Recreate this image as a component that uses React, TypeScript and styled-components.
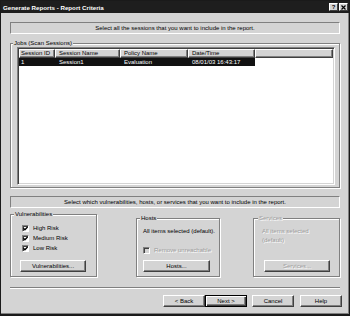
import React from "react";
import styled, { createGlobalStyle, css } from "styled-components";

const FACE = "#d4d4d4";
const SHADOW = "#808080";
const DARK = "#404040";

const GlobalStyle = createGlobalStyle`
  html, body { margin: 0; padding: 0; background: ${FACE}; }
  *, *::before, *::after { box-sizing: border-box; }
`;

const Dialog = styled.div`
  width: 350px;
  height: 316px;
  background: ${FACE};
  border: 1px solid #1a1a1a;
  border-bottom-width: 2px;
  box-shadow: inset -1px -1px 0 ${SHADOW};
  display: flex;
  flex-direction: column;
  font-family: "Liberation Sans", Arial, sans-serif;
  font-size: 6px;
  line-height: 7px;
  color: #000;
  overflow: hidden;
`;

const TitleBar = styled.div`
  height: 12px;
  flex: none;
  background: #1e1e1e;
  color: #fff;
  font-weight: bold;
  font-size: 6.2px;
  display: flex;
  align-items: center;
  justify-content: space-between;
  padding: 0 1px 0 2px;
`;

const TitleButtons = styled.div`
  display: flex;
  gap: 1px;
`;

const TitleButton = styled.div`
  width: 9px;
  height: 8px;
  background: ${FACE};
  border: 1px solid;
  border-color: #fff ${DARK} ${DARK} #fff;
  color: #000;
  font-size: 6px;
  font-weight: bold;
  line-height: 6px;
  display: flex;
  align-items: center;
  justify-content: center;
`;

const Body = styled.div`
  flex: 1;
  display: flex;
  flex-direction: column;
  padding: 0 9px;
`;

const Strip = styled.div<{ $top: number }>`
  margin-top: ${(p) => p.$top}px;
  height: 12px;
  flex: none;
  border: 1px solid;
  border-color: ${SHADOW} #fff #fff ${SHADOW};
  display: flex;
  align-items: center;
  justify-content: center;
  white-space: nowrap;
`;

const Group = styled.fieldset<{ $width?: number; $left?: number; $top?: number }>`
  margin: ${(p) => p.$top ?? 0}px 0 0 ${(p) => p.$left ?? 0}px;
  padding: 0;
  min-width: 0;
  ${(p) => (p.$width ? `width: ${p.$width}px;` : "")}
  flex: none;
  border: 1px solid ${SHADOW};
  box-shadow: inset 1px 1px 0 #fff, 1px 1px 0 #fff;
`;

const Legend = styled.legend<{ $indent: number; $disabled?: boolean }>`
  margin-left: ${(p) => p.$indent}px;
  padding: 0 1px;
  font-size: 6px;
  line-height: 7px;
  background: ${FACE};
  ${(p) =>
    p.$disabled &&
    css`
      color: #9c9c9c;
      text-shadow: 1px 1px 0 #fff;
    `}
`;

const GroupBody = styled.div<{ $height: number; $pad: string }>`
  height: ${(p) => p.$height}px;
  padding: ${(p) => p.$pad};
  display: flex;
  flex-direction: column;
`;

const ListView = styled.div`
  height: 138px;
  background: #fff;
  border: 1px solid;
  border-color: ${SHADOW} #fff #fff ${SHADOW};
  box-shadow: inset 1px 1px 0 ${DARK}, inset -1px -1px 0 ${FACE};
  padding: 1px;
  display: flex;
  flex-direction: column;
`;

const COLS = "36px 65px 68px 67px";

const HeaderRow = styled.div`
  display: grid;
  grid-template-columns: ${COLS} 1fr;
  height: 9px;
  flex: none;
`;

const HeaderCell = styled.div<{ $first?: boolean }>`
  background: ${FACE};
  border: 1px solid;
  border-color: #fff ${DARK} ${DARK} #fff;
  box-shadow: inset -1px -1px 0 ${SHADOW};
  padding-left: ${(p) => (p.$first ? 1 : 3)}px;
  line-height: 7px;
  white-space: nowrap;
  overflow: hidden;
`;

const DataRow = styled.div<{ $selected?: boolean }>`
  display: grid;
  grid-template-columns: ${COLS};
  width: 236px;
  height: 8px;
  line-height: 8px;
  ${(p) =>
    p.$selected &&
    css`
      background: #111;
      color: #fff;
    `}
`;

const DataCell = styled.div<{ $first?: boolean }>`
  padding-left: ${(p) => (p.$first ? 2 : 4)}px;
  white-space: nowrap;
  overflow: hidden;
`;

const GroupRow = styled.div`
  margin-top: 3px;
  display: flex;
  align-items: flex-end;
`;

const CheckList = styled.div`
  margin-left: 2px;
  display: flex;
  flex-direction: column;
`;

const CheckRow = styled.div<{ $disabled?: boolean; $top?: number }>`
  height: 10px;
  margin-top: ${(p) => p.$top ?? 0}px;
  display: flex;
  align-items: center;
  gap: 4px;
  white-space: nowrap;
  ${(p) =>
    p.$disabled &&
    css`
      color: #9c9c9c;
      text-shadow: 1px 1px 0 #fff;
    `}
`;

const Box = styled.span<{ $disabled?: boolean }>`
  width: 7px;
  height: 7px;
  flex: none;
  border: 1px solid;
  border-color: ${SHADOW} #fff #fff ${SHADOW};
  box-shadow: inset 1px 1px 0 ${DARK};
  background: ${(p) => (p.$disabled ? FACE : "#fff")};
  display: flex;
  align-items: center;
  justify-content: center;
`;

const Text = styled.div<{ $disabled?: boolean }>`
  line-height: 9px;
  white-space: nowrap;
  ${(p) =>
    p.$disabled &&
    css`
      color: #9c9c9c;
      text-shadow: 1px 1px 0 #fff;
    `}
`;

const Button = styled.button<{ $width: number; $default?: boolean; $disabled?: boolean; $left?: number }>`
  width: ${(p) => p.$width}px;
  height: 12px;
  flex: none;
  margin: 0 0 0 ${(p) => p.$left ?? 0}px;
  padding: 0;
  font: inherit;
  line-height: 8px;
  color: #000;
  background: ${FACE};
  border: 1px solid;
  border-color: #fff ${DARK} ${DARK} #fff;
  box-shadow: inset -1px -1px 0 ${SHADOW};
  ${(p) =>
    p.$default &&
    css`
      border-color: #000;
      box-shadow: inset 1px 1px 0 #fff, inset -1px -1px 0 ${DARK}, inset -2px -2px 0 ${SHADOW};
    `}
  ${(p) =>
    p.$disabled &&
    css`
      color: #9c9c9c;
      text-shadow: 1px 1px 0 #fff;
    `}
`;

const GroupButton = styled(Button)`
  margin-top: auto;
`;

const Separator = styled.div`
  margin-top: 10px;
  height: 2px;
  flex: none;
  border-top: 1px solid ${SHADOW};
  border-bottom: 1px solid #fff;
`;

const ButtonRow = styled.div`
  margin-top: 6px;
  margin-right: -2px;
  display: flex;
  justify-content: flex-end;
`;

const Check = () => (
  <svg width="5" height="5" viewBox="0 0 5 5">
    <path d="M0.4 2.3 L1.9 3.8 L4.6 0.9" fill="none" stroke="#000" strokeWidth="1.3" />
  </svg>
);

const CloseGlyph = () => (
  <svg width="5" height="5" viewBox="0 0 5 5">
    <path d="M0.5 0.5 L4.5 4.5 M4.5 0.5 L0.5 4.5" stroke="#000" strokeWidth="1.2" />
  </svg>
);

const sessions = [
  { id: "1", name: "Session1", policy: "Evaluation", date: "08/01/03  16:43:17" },
];

const risks = ["High Risk", "Medium Risk", "Low Risk"];

export default function App() {
  return (
    <>
      <GlobalStyle />
      <Dialog>
        <TitleBar>
          <span>Generate Reports - Report Criteria</span>
          <TitleButtons>
            <TitleButton>?</TitleButton>
            <TitleButton>
              <CloseGlyph />
            </TitleButton>
          </TitleButtons>
        </TitleBar>
        <Body>
          <Strip $top={9}>Select all the sessions that you want to include in the report.</Strip>

          <Group $top={6}>
            <Legend $indent={2}>Jobs (Scan Sessions)</Legend>
            <GroupBody $height={140} $pad="0 4px 2px 6px">
              <ListView>
                <HeaderRow>
                  <HeaderCell $first>Session ID</HeaderCell>
                  <HeaderCell>Session Name</HeaderCell>
                  <HeaderCell>Policy Name</HeaderCell>
                  <HeaderCell>Date/Time</HeaderCell>
                  <HeaderCell />
                </HeaderRow>
                {sessions.map((s) => (
                  <DataRow key={s.id} $selected>
                    <DataCell $first>{s.id}</DataCell>
                    <DataCell>{s.name}</DataCell>
                    <DataCell>{s.policy}</DataCell>
                    <DataCell>{s.date}</DataCell>
                  </DataRow>
                ))}
              </ListView>
            </GroupBody>
          </Group>

          <Strip $top={8}>
            Select which vulnerabilities, hosts, or services that you want to include in the report.
          </Strip>

          <GroupRow>
            <Group $width={87}>
              <Legend $indent={3}>Vulnerabilities</Legend>
              <GroupBody $height={58} $pad="5px 0 4px 9px">
                <CheckList>
                  {risks.map((r) => (
                    <CheckRow key={r}>
                      <Box>
                        <Check />
                      </Box>
                      {r}
                    </CheckRow>
                  ))}
                </CheckList>
                <GroupButton $width={66}>Vulnerabilities...</GroupButton>
              </GroupBody>
            </Group>

            <Group $width={84} $left={39}>
              <Legend $indent={3}>Hosts</Legend>
              <GroupBody $height={54} $pad="5px 0 4px 6px">
                <Text>All items selected (default).</Text>
                <CheckRow $disabled $top={9}>
                  <Box $disabled />
                  Remove unreachable
                </CheckRow>
                <GroupButton $width={67}>Hosts...</GroupButton>
              </GroupBody>
            </Group>

            <Group $width={87} $left={33}>
              <Legend $indent={4} $disabled>
                Services
              </Legend>
              <GroupBody $height={54} $pad="5px 0 4px 8px">
                <Text $disabled>All items selected</Text>
                <Text $disabled>(default)</Text>
                <GroupButton $width={66} $left={2} $disabled>
                  Services...
                </GroupButton>
              </GroupBody>
            </Group>
          </GroupRow>

          <Separator />

          <ButtonRow>
            <Button $width={42}>&lt; Back</Button>
            <Button $width={42} $default>
              Next &gt;
            </Button>
            <Button $width={42} $left={5}>
              Cancel
            </Button>
            <Button $width={42} $left={6}>
              Help
            </Button>
          </ButtonRow>
        </Body>
      </Dialog>
    </>
  );
}
